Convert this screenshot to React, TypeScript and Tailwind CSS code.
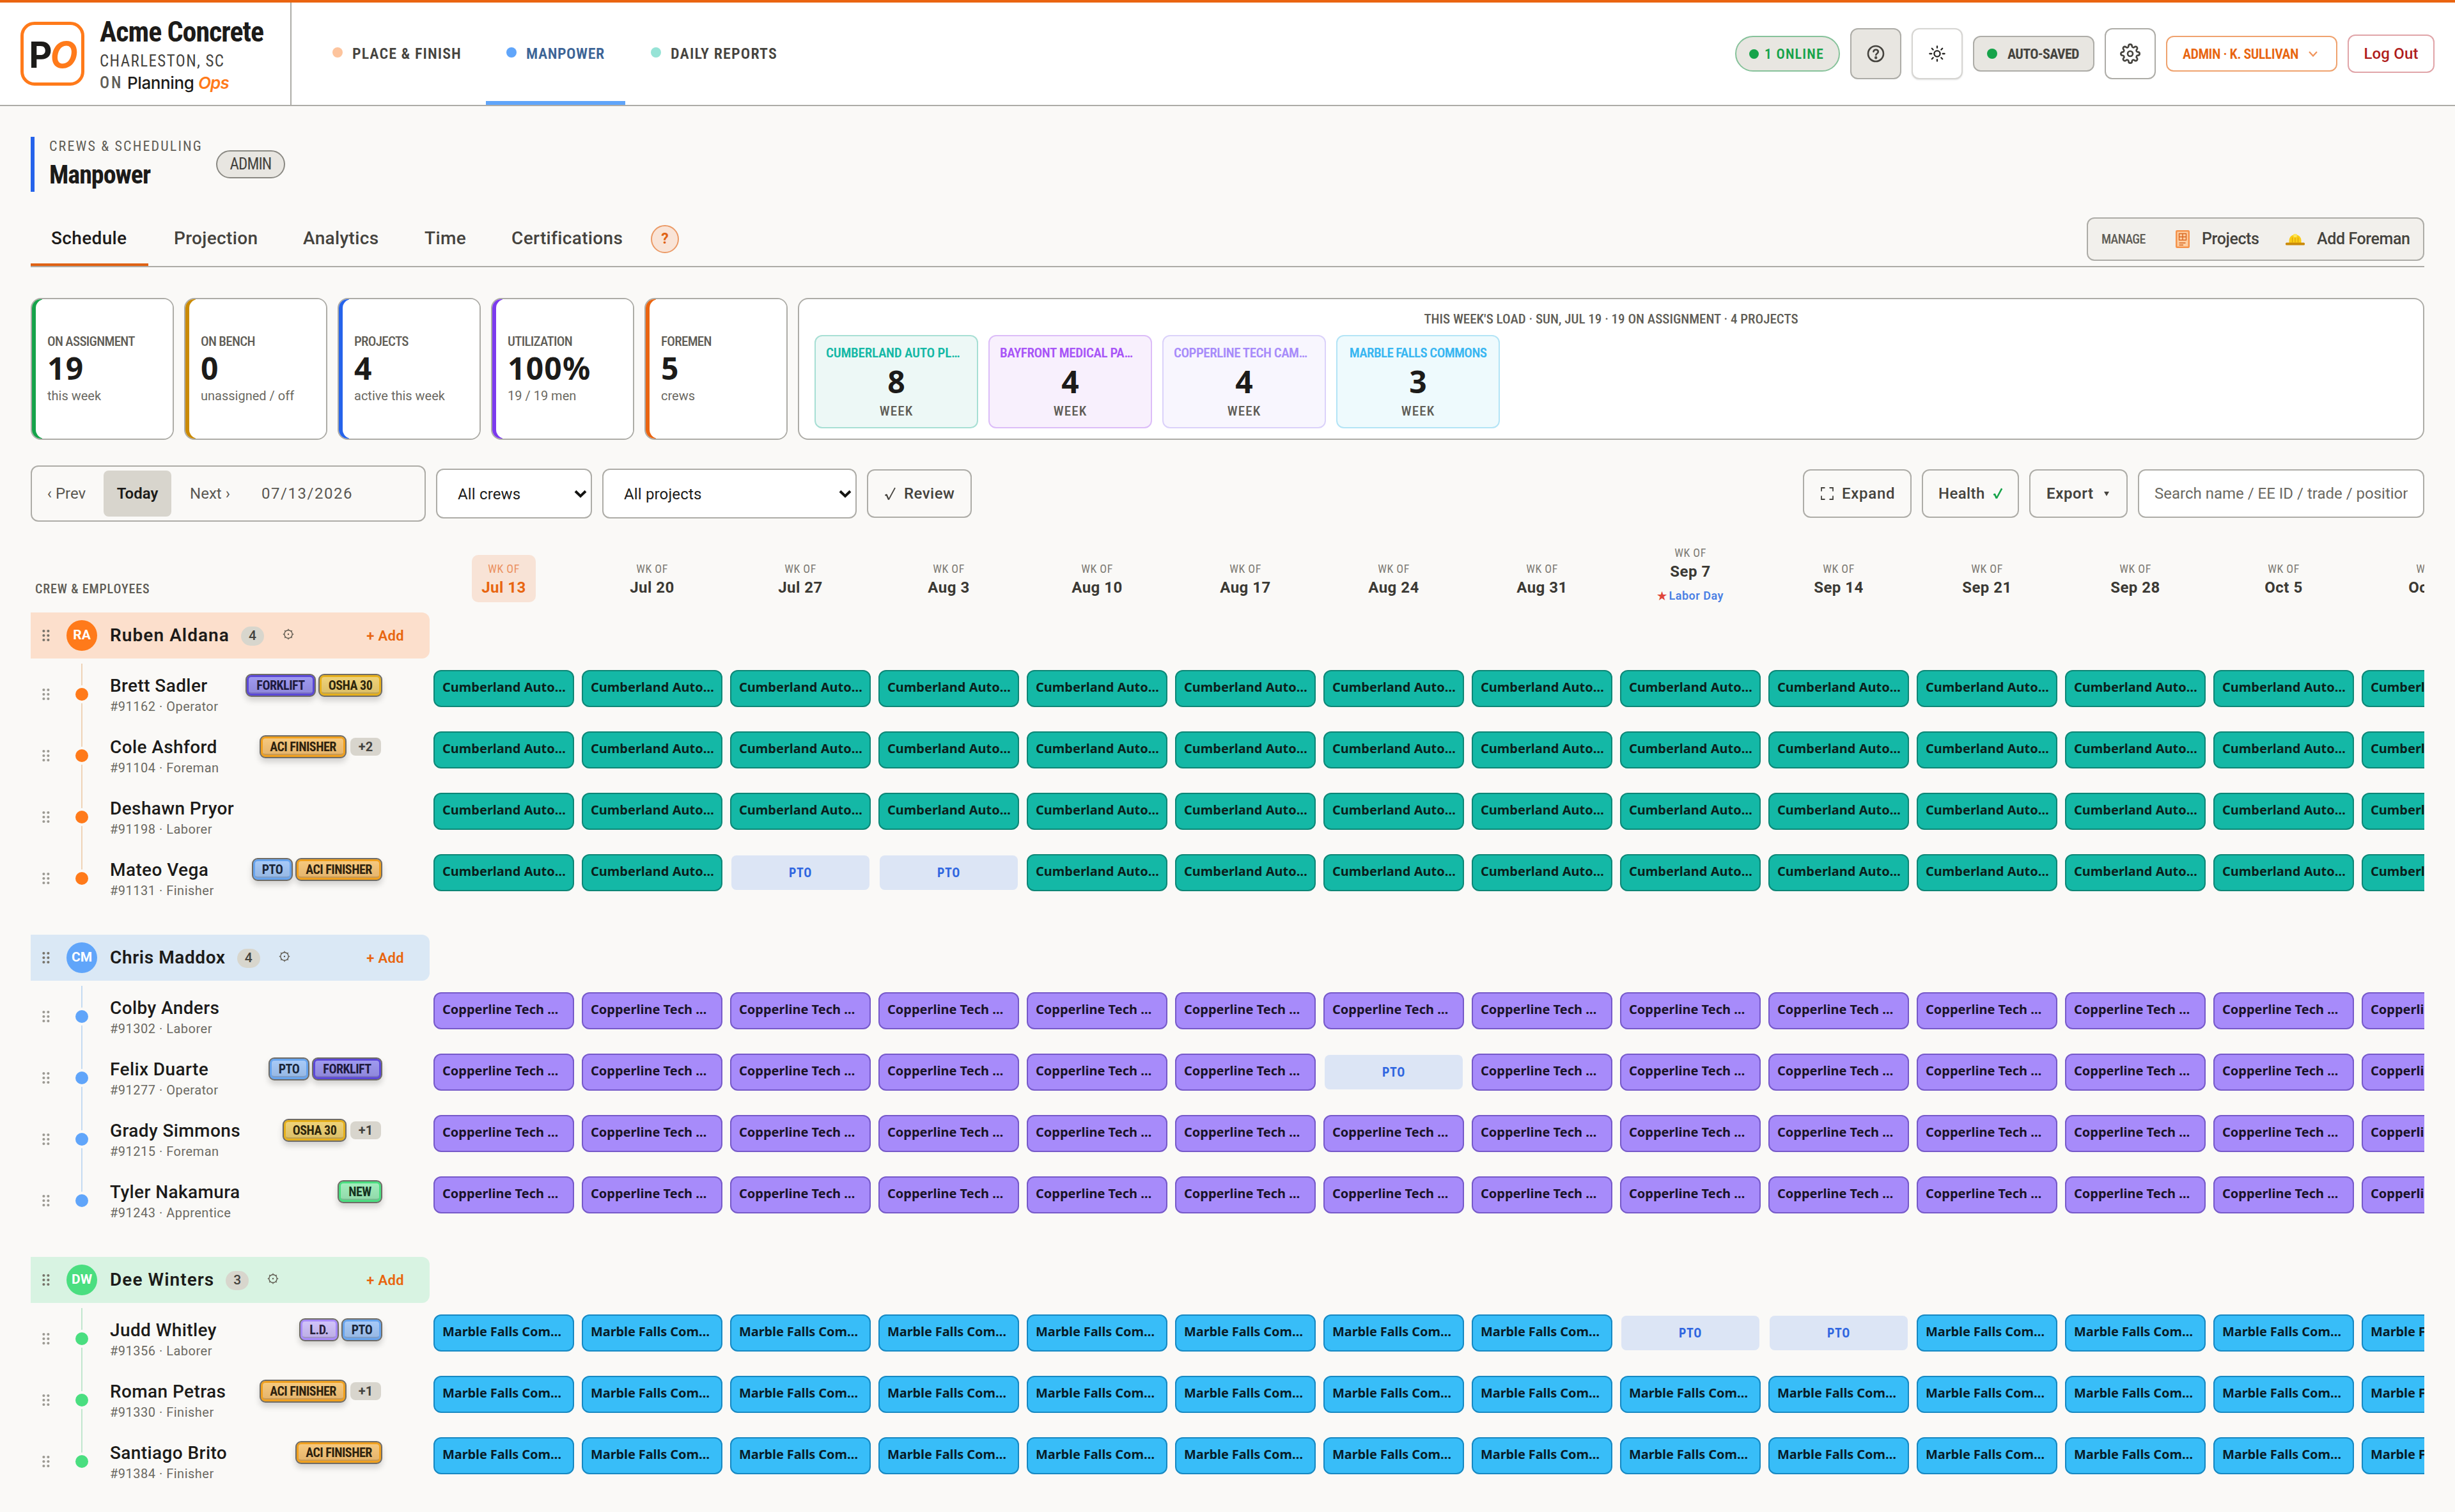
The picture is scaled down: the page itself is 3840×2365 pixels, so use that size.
import { clsx } from "clsx";
import { FiSettings } from "react-icons/fi";

const condensed = "font-['Roboto_Condensed',sans-serif]";

const navItems = [
  { label: "PLACE & FINISH", dot: "bg-[#fdc49d]", width: "w-[264px]", tracking: "tracking-[1.06px]" },
  { label: "MANPOWER", dot: "bg-[#60a5fa]", width: "w-[218px]", tracking: "tracking-[0.53px]", active: true },
  { label: "DAILY REPORTS", dot: "bg-[#96e3d6]", width: "w-[262px]", tracking: "tracking-[1.17px]" },
];

const tabs = [
  { label: "Schedule", width: "w-[184px]", active: true },
  { label: "Projection", width: "w-[194px]" },
  { label: "Analytics", width: "w-[182px]" },
  { label: "Time", width: "w-[128px]" },
  { label: "Certifications", width: "w-[234px]" },
];

const stats = [
  { label: "ON ASSIGNMENT", value: "19", sub: "this week", bar: "bg-[#16a34a]" },
  { label: "ON BENCH", value: "0", sub: "unassigned / off", bar: "bg-[#ca8a04]" },
  { label: "PROJECTS", value: "4", sub: "active this week", bar: "bg-[#2563eb]" },
  { label: "UTILIZATION", value: "100%", sub: "19 / 19 men", bar: "bg-[#7c3aed]" },
  { label: "FOREMEN", value: "5", sub: "crews", bar: "bg-[#ea6410]" },
];

const loads = [
  { name: "CUMBERLAND AUTO PL…", count: 8, box: "border-[#a7dfd4] bg-[#edf8f6]", text: "pl-4 text-left text-[#14b8a6] tracking-[-0.24px]" },
  { name: "BAYFRONT MEDICAL PA…", count: 4, box: "border-[#dcbdf8] bg-[#f8f0fd]", text: "pl-4 text-left text-[#a855f7] tracking-[-0.4px]" },
  { name: "COPPERLINE TECH CAM…", count: 4, box: "border-[#dbd2fa] bg-[#f8f6fe]", text: "pl-4 text-left text-[#a78bfa] tracking-[-0.5px]" },
  { name: "MARBLE FALLS COMMONS", count: 3, box: "border-[#b3e4f6] bg-[#eefafd]", text: "text-[#38b6f1] tracking-[-0.61px]" },
];

const weeks = [
  "Jul 13", "Jul 20", "Jul 27", "Aug 3", "Aug 10", "Aug 17", "Aug 24",
  "Aug 31", "Sep 7", "Sep 14", "Sep 21", "Sep 28", "Oct 5", "Oct 12",
];

const badgeStyles: Record<string, string> = {
  FORKLIFT:
    "w-[110px] text-[#1e1a3e] from-[#a19cf2] to-[#8c85d8] shadow-[inset_0_0_0_3px_#5b48d8,inset_0_-5px_0_#7970c4,0_6px_10px_rgba(0,0,0,.16)]",
  "OSHA 30":
    "w-[100px] text-[#2e260c] from-[#f1d57b] to-[#d8bc66] shadow-[inset_0_0_0_3px_#e6b01c,inset_0_-5px_0_#bfa354,0_6px_10px_rgba(0,0,0,.16)]",
  "ACI FINISHER":
    "w-[136px] text-[#2e220f] from-[#f8cb80] to-[#e2b16a] shadow-[inset_0_0_0_3px_#f0a01e,inset_0_-5px_0_#c99a55,0_6px_10px_rgba(0,0,0,.16)]",
  PTO:
    "w-[64px] text-[#1a2638] from-[#a9ccfa] to-[#94b5e0] shadow-[inset_0_0_0_3px_#67a4ee,inset_0_-5px_0_#7f9ec8,0_6px_10px_rgba(0,0,0,.16)]",
  NEW:
    "w-[70px] text-[#15331f] from-[#a5f0bf] to-[#8ed6a7] shadow-[inset_0_0_0_3px_#4ade80,inset_0_-5px_0_#78bd91,0_6px_10px_rgba(0,0,0,.16)]",
  "L.D.":
    "w-[62px] text-[#261f3a] from-[#d3c5fb] to-[#b9abe2] shadow-[inset_0_0_0_3px_#a78bfa,inset_0_-5px_0_#a294c8,0_6px_10px_rgba(0,0,0,.16)]",
};

type Employee = { name: string; meta: string; badges: string[]; more?: string; pto?: number[] };

type Crew = {
  initials: string;
  name: string;
  head: string;
  accent: string;
  line: string;
  chip: string;
  project: string;
  nameTracking: string;
  employees: Employee[];
};

const crews: Crew[] = [
  {
    initials: "RA",
    name: "Ruben Aldana",
    head: "bg-[#fcdfcc]",
    accent: "bg-[#ff7a1a]",
    line: "bg-[#efd3b6]",
    chip: "bg-[#14b8a6] border-[#0d8676] text-[#0a1f1c]",
    project: "Cumberland Auto…",
    nameTracking: "tracking-[1.05px]",
    employees: [
      { name: "Brett Sadler", meta: "#91162 · Operator", badges: ["FORKLIFT", "OSHA 30"] },
      { name: "Cole Ashford", meta: "#91104 · Foreman", badges: ["ACI FINISHER"], more: "+2" },
      { name: "Deshawn Pryor", meta: "#91198 · Laborer", badges: [] },
      { name: "Mateo Vega", meta: "#91131 · Finisher", badges: ["PTO", "ACI FINISHER"], pto: [2, 3] },
    ],
  },
  {
    initials: "CM",
    name: "Chris Maddox",
    head: "bg-[#dae8f5]",
    accent: "bg-[#60a5fa]",
    line: "bg-[#c4dbf2]",
    chip: "bg-[#a78bfa] border-[#7659c9] text-[#1a1328]",
    project: "Copperline Tech …",
    nameTracking: "tracking-[0.6px]",
    employees: [
      { name: "Colby Anders", meta: "#91302 · Laborer", badges: [] },
      { name: "Felix Duarte", meta: "#91277 · Operator", badges: ["PTO", "FORKLIFT"], pto: [6] },
      { name: "Grady Simmons", meta: "#91215 · Foreman", badges: ["OSHA 30"], more: "+1" },
      { name: "Tyler Nakamura", meta: "#91243 · Apprentice", badges: ["NEW"] },
    ],
  },
  {
    initials: "DW",
    name: "Dee Winters",
    head: "bg-[#d8f3e2]",
    accent: "bg-[#4ade80]",
    line: "bg-[#c0e6ce]",
    chip: "bg-[#38bdf8] border-[#1688c2] text-[#081c28] tracking-[-0.1px]",
    project: "Marble Falls Com…",
    nameTracking: "tracking-[1.05px]",
    employees: [
      { name: "Judd Whitley", meta: "#91356 · Laborer", badges: ["L.D.", "PTO"], pto: [8, 9] },
      { name: "Roman Petras", meta: "#91330 · Finisher", badges: ["ACI FINISHER"], more: "+1" },
      { name: "Santiago Brito", meta: "#91384 · Finisher", badges: ["ACI FINISHER"] },
    ],
  },
];

/* ── Icons ── */

function HelpIcon() {
  return (
    <svg width="28" height="28" viewBox="0 0 28 28" fill="none" stroke="#45433e" strokeWidth="2.6" strokeLinecap="round" strokeLinejoin="round">
      <circle cx="14" cy="14" r="12" />
      <path d="M10.4 10.8c.4-1.9 1.8-3 3.7-3 2.1 0 3.7 1.3 3.7 3.2 0 2.6-3.5 2.8-3.5 5" />
      <circle cx="14.2" cy="20.2" r="0.9" />
    </svg>
  );
}

function SunIcon() {
  return (
    <svg width="28" height="28" viewBox="0 0 28 28" fill="none" stroke="#262522" strokeWidth="2.3" strokeLinecap="round">
      <circle cx="14" cy="14" r="4.6" />
      <path d="M14 2.4v2.4M14 23.2v2.4M2.4 14h2.9M22.7 14h2.9M5.8 5.8l1.9 1.9M20.3 20.3l1.9 1.9M5.8 22.2l1.9-1.9M20.3 7.7l1.9-1.9" />
    </svg>
  );
}

function BlueprintIcon() {
  return (
    <svg width="22" height="28" viewBox="0 0 22 28" fill="none">
      <rect x="1.25" y="1.25" width="19.5" height="25.5" rx="1" fill="#fdcfa3" stroke="#f5924a" strokeWidth="2.5" />
      <path d="M5.5 5.5h11v10h-11zM11 5.5v10M5.5 10.5h11M5.5 20h10M5.5 23.2h6.5" stroke="#d9661f" strokeWidth="1.4" />
    </svg>
  );
}

function HardHatIcon() {
  return (
    <svg width="30" height="19" viewBox="0 0 30 19" fill="none">
      <path d="M5.5 15v-3.5C5.5 5.8 9.8 2 15 2s9.5 3.8 9.5 9.5V15z" fill="#facc15" />
      <path d="M12 1.6c1.6-1 4.4-1 6 0L17.3 6h-4.6z" fill="#fde65a" />
      <path d="M10.5 6.5V14M15 7v7M19.5 6.5V14" stroke="#d79c0c" strokeWidth="1" />
      <rect x="0" y="14.5" width="30" height="4" rx="1.5" fill="#ca8a0a" />
    </svg>
  );
}

function GripIcon({ className }: { className: string }) {
  return (
    <svg width="12" height="20" viewBox="0 0 12 20" className={className} fill="currentColor">
      <circle cx="2.4" cy="3" r="2.1" />
      <circle cx="9.4" cy="3" r="2.1" />
      <circle cx="2.4" cy="10" r="2.1" />
      <circle cx="9.4" cy="10" r="2.1" />
      <circle cx="2.4" cy="17" r="2.1" />
      <circle cx="9.4" cy="17" r="2.1" />
    </svg>
  );
}

function CogIcon() {
  return (
    <svg width="18" height="18" viewBox="0 0 18 18" fill="none" stroke="#5f5a50" strokeWidth="1.4">
      <circle cx="9" cy="9" r="6.2" />
      <circle cx="9" cy="9" r="1.2" fill="#5f5a50" stroke="none" />
      <path d="M9 .8v2M9 15.2v2M.8 9h2M15.2 9h2M3.2 3.2l1.4 1.4M13.4 13.4l1.4 1.4M3.2 14.8l1.4-1.4M13.4 4.6l1.4-1.4" />
    </svg>
  );
}

function CheckIcon({ color, size, bold }: { color: string; size: number; bold?: boolean }) {
  return (
    <svg width={size} height={size + 3} viewBox="0 0 18 21" fill="none" stroke={color} strokeLinejoin="round">
      <path d="M1.5 13l2.2-1.2L7 19.5" strokeWidth={bold ? 3.2 : 2.2} />
      <path d="M7 19.5L17 1" strokeWidth={bold ? 3 : 1.7} />
    </svg>
  );
}

function ExpandIcon() {
  return (
    <svg width="20" height="20" viewBox="0 0 20 20" fill="none" stroke="#45433e" strokeWidth="1.8">
      <path d="M1 6.5V1h5.5M13.5 1H19v5.5M19 13.5V19h-5.5M6.5 19H1v-5.5" />
    </svg>
  );
}

function SelectArrow() {
  return (
    <svg width="20" height="13" viewBox="0 0 20 13" fill="none" stroke="#141412" strokeWidth="4">
      <path d="M2 2.2l8 7.8 8-7.8" />
    </svg>
  );
}

/* ── Header ── */

function Header() {
  return (
    <header className="flex h-[166px] border-t-4 border-b-2 border-t-[#ea6410] border-b-[#adaca7] bg-white">
      <div className="flex w-[456px] items-center border-r-2 border-[#adaca7] pl-8">
        <div className="flex size-[100px] items-center justify-center rounded-[22px] border-[5px] border-[#ff7a1a] pt-[3px] font-['Inter',sans-serif] text-[56px] leading-none font-bold tracking-[-3px]">
          <span className="text-[#1c1b19]">P</span>
          <span className="text-[#ff7a1a] italic">O</span>
        </div>
        <div className={clsx(condensed, "ml-[24px]")}>
          <div className="text-[44px] leading-[58px] font-bold tracking-[-0.99px] text-[#1c1b19]">Acme Concrete</div>
          <div className="text-[25px] leading-[33px] tracking-[1.4px] text-[#45433e]">CHARLESTON, SC</div>
          <div className="flex text-[25px] leading-[36px] font-medium text-[#5f5d56]">
            <span className="w-[43px] tracking-[2.9px]">ON</span>
            <span className="w-[111px] font-['Inter',sans-serif] text-[26px] tracking-[-0.4px] text-[#1c1b19]">Planning</span>
            <span className="font-['Inter',sans-serif] text-[26px] font-semibold tracking-[-0.9px] text-[#ff7a1a] italic">Ops</span>
          </div>
        </div>
      </div>

      <nav className="ml-8 flex gap-2">
        {navItems.map((item) => (
          <div
            key={item.label}
            className={clsx(
              condensed,
              "flex items-center gap-[15px] border-b-[6px] pt-[2px] pl-8 text-[24px] font-semibold",
              item.width,
              item.tracking,
              item.active ? "border-[#60a5fa] text-[#3c6496]" : "border-transparent text-[#45433e]"
            )}
          >
            <span className={clsx("size-4 rounded-full", item.dot)} />
            <span className="pt-[3px]">{item.label}</span>
          </div>
        ))}
      </nav>

      <div className={clsx(condensed, "mr-8 ml-auto flex items-center gap-4")}>
        <div className="flex h-14 w-[164px] items-center rounded-full border-2 border-[#86c29a] bg-[#e8e6e1] pl-5 text-[22px] font-semibold tracking-[1.17px] text-[#16a34a]">
          <span className="mr-[9px] size-[15px] rounded-full bg-[#16a34a]" />
          <span className="pt-px">1 ONLINE</span>
        </div>
        <div className="flex size-20 items-center justify-center rounded-xl border-2 border-[#adaca7] bg-[#e8e6e1]">
          <HelpIcon />
        </div>
        <div className="flex size-20 items-center justify-center rounded-xl border-2 border-[#d6d5d2] bg-white shadow-sm">
          <SunIcon />
        </div>
        <div className="flex h-14 w-[190px] items-center rounded-xl border-2 border-[#adaca7] bg-[#e8e6e1] pl-5 text-[22px] font-bold tracking-[-0.67px] text-[#45433e]">
          <span className="mr-4 size-4 rounded-full bg-[#16a34a]" />
          <span className="pt-px">AUTO-SAVED</span>
        </div>
        <div className="flex size-20 items-center justify-center rounded-xl border-2 border-[#adaca7] bg-white">
          <FiSettings size={32} color="#45433e" />
        </div>
        <div className="flex h-14 w-[268px] items-center rounded-xl border-2 border-[#efa26e] bg-white pl-6 text-[22px] font-semibold tracking-[-0.51px] text-[#e8650f]">
          <span className="pt-px">ADMIN · K. SULLIVAN</span>
          <svg width="14" height="9" viewBox="0 0 14 9" fill="none" stroke="#f0935a" strokeWidth="2.2" className="ml-4">
            <path d="M1 1l6 6.5L13 1" />
          </svg>
        </div>
        <div className="flex h-[60px] w-[136px] items-center justify-center rounded-xl border-2 border-[#e0a4a8] bg-white font-['Roboto',sans-serif] text-[24px] font-medium tracking-[0.16px] text-[#b01c1c]">
          Log Out
        </div>
      </div>
    </header>
  );
}

function PageHead() {
  return (
    <div className={clsx(condensed, "mt-12 flex items-center gap-6")}>
      <div className="h-[86px] w-[266px] border-l-[6px] border-[#2563eb] pl-[23px] whitespace-nowrap">
        <div className="text-[22px] leading-[30px] tracking-[2.15px] text-[#5f5d56]">CREWS & SCHEDULING</div>
        <div className="pt-1 text-[40px] leading-[52px] font-bold tracking-[-1.01px] text-[#1c1b19]">Manpower</div>
      </div>
      <div className="flex h-11 w-[108px] items-center justify-center rounded-full border-2 border-[#8a8983] bg-[#e8e6e1] text-[25px] tracking-[-0.9px] text-[#45433e]">
        ADMIN
      </div>
    </div>
  );
}

function TabBar() {
  return (
    <div className="mt-8 flex h-[86px] items-center border-b-2 border-[#adaca7]">
      <div className="flex gap-2">
        {tabs.map((tab) => (
          <div
            key={tab.label}
            className={clsx(
              "flex h-[84px] items-center border-b-4 pt-px pl-8 text-[28px] font-medium tracking-[0.35px]",
              tab.width,
              tab.active ? "border-[#e06214] text-[#1c1b19]" : "border-transparent text-[#45433e]"
            )}
          >
            {tab.label}
          </div>
        ))}
      </div>
      <div className="ml-4 flex size-11 items-center justify-center rounded-full border-2 border-[#eb9a66] bg-[#f9e4d7] text-[23px] font-bold text-[#e06214]">
        ?
      </div>
      <div className="ml-auto flex h-[68px] w-[528px] items-center rounded-xl border-2 border-[#adaca7] bg-[#f2f0ec] pl-[21px] text-[25px] font-medium tracking-[-0.39px] text-[#45433e]">
        <span className={clsx(condensed, "w-[116px] text-[20px] tracking-[-0.7px] text-[#5f5d56]")}>MANAGE</span>
        <BlueprintIcon />
        <span className="ml-[19px] w-[131px]">Projects</span>
        <HardHatIcon />
        <span className="ml-[19px]">Add Foreman</span>
      </div>
    </div>
  );
}

/* ── Stats strip ── */

function Stats() {
  return (
    <div className="mt-12 flex h-[222px] gap-4">
      {stats.map((s) => (
        <div key={s.label} className="flex w-[224px] overflow-hidden rounded-2xl border-2 border-[#adaca7] bg-white">
          <div className={clsx("w-4 shrink-0", s.bar)} />
          <div className="-ml-[10px] flex flex-1 flex-col justify-center rounded-l-[14px] bg-white pl-[18px] whitespace-nowrap">
            <div className={clsx(condensed, "text-[21px] leading-7 font-medium tracking-[-0.7px] text-[#5f5d56]")}>{s.label}</div>
            <div className="font-['Noto_Sans',sans-serif] text-[48px] leading-[56px] font-bold tracking-[1.2px] text-[#1c1b19]">{s.value}</div>
            <div className="text-[20px] leading-[30px] text-[#6b6962]">{s.sub}</div>
          </div>
        </div>
      ))}
      <div className="flex-1 rounded-2xl border-2 border-[#adaca7] bg-white px-6 pt-[14px]">
        <div className={clsx(condensed, "text-center text-[21px] leading-[34px] font-medium text-[#5f5d56]")}>
          THIS WEEK'S LOAD · SUN, JUL 19 · 19 ON ASSIGNMENT · 4 PROJECTS
        </div>
        <div className="mt-2 flex gap-4">
          {loads.map((l) => (
            <div key={l.name} className={clsx("h-[146px] w-[256px] rounded-xl border-2 pt-3 text-center", l.box)}>
              <div className={clsx(condensed, "text-[21px] leading-7 font-semibold whitespace-nowrap", l.text)}>{l.name}</div>
              <div className="font-['Noto_Sans',sans-serif] text-[48px] leading-[62px] font-bold text-[#1c1b19]">{l.count}</div>
              <div className={clsx(condensed, "text-[21px] leading-[30px] font-medium tracking-[1.14px] text-[#5f5d56]")}>WEEK</div>
            </div>
          ))}
        </div>
      </div>
    </div>
  );
}

function Toolbar() {
  const button = "flex h-[76px] items-center rounded-xl border-2 border-[#adaca7] text-[24px] text-[#45433e]";
  const select = "flex h-[78px] items-center justify-between rounded-xl border-2 border-[#adaca7] bg-white pl-8 pr-[6px] text-[24px] tracking-[0.16px] text-[#1c1b19]";
  return (
    <div className="mt-10 flex h-[88px] items-center gap-4">
      <div className="flex h-[88px] w-[618px] items-center rounded-xl border-2 border-[#adaca7] pl-1 text-[24px] text-[#5a5852]">
        <div className="w-[100px] text-center">‹ Prev</div>
        <div className="mx-2 flex h-[72px] w-[106px] items-center justify-center rounded-lg bg-[#d8d5cd] font-semibold text-[#1c1b19]">Today</div>
        <div className="w-[105px] text-center">Next ›</div>
        <div className="ml-[28px] tracking-[1.53px]">07/13/2026</div>
      </div>
      <div className={clsx(select, "w-[244px]")}>
        <span className="pt-[2px]">All crews</span>
        <SelectArrow />
      </div>
      <div className={clsx(select, "w-[398px]")}>
        <span className="pt-[2px]">All projects</span>
        <SelectArrow />
      </div>
      <div className={clsx(button, "w-[164px] gap-[13px] pl-[25px] font-medium tracking-[0.46px]")}>
        <CheckIcon color="#45433e" size={18} />
        Review
      </div>
      <div className={clsx(button, "ml-auto w-[170px] gap-[13px] pl-[26px] font-medium tracking-[0.72px]")}>
        <ExpandIcon />
        Expand
      </div>
      <div className={clsx(button, "w-[152px] gap-[12px] pl-[24px] font-medium tracking-[0.4px]")}>
        Health
        <CheckIcon color="#16a34a" size={15} bold />
      </div>
      <div className={clsx(button, "w-[154px] gap-4 pl-[25px] font-semibold tracking-[0.6px]")}>
        Export
        <svg width="8" height="7" viewBox="0 0 8 7" fill="#45433e">
          <path d="M0 0h8L4 7z" />
        </svg>
      </div>
      <div className={clsx(button, "w-[448px] bg-white px-6")}>
        <span className="overflow-hidden whitespace-nowrap text-[#6b6962]">Search name / EE ID / trade / position</span>
      </div>
    </div>
  );
}

/* ── Schedule grid ── */

function WeekHeader() {
  return (
    <div className="mt-9 flex h-[106px] items-center overflow-x-clip">
      <div className={clsx(condensed, "mb-[17px] w-[624px] shrink-0 self-end pl-[7px] text-[20px] leading-10 font-medium tracking-[0.87px] text-[#5f5d56]")}>
        CREW & EMPLOYEES
      </div>
      {weeks.map((week, i) => (
        <div key={week} className="flex w-[232px] shrink-0 justify-center">
          <div className={clsx("rounded-[10px] py-2 text-center", i === 0 && "w-[100px] bg-[#f8e3d6]")}>
            <div className={clsx(condensed, "text-[18px] leading-[28px] tracking-[0.5px]", i === 0 ? "text-[#eb9160]" : "text-[#7d7b74]")}>WK OF</div>
            <div className={clsx("text-[24px] leading-[30px] font-bold tracking-[0.5px]", i === 0 ? "text-[#e8650f]" : "text-[#3b3934]")}>{week}</div>
            {week === "Sep 7" && (
              <div className="flex h-[50px] gap-[3px] text-[18px] leading-[46px] font-semibold tracking-[0.5px] text-[#4a80e4]">
                <span className="text-[17px] text-[#e0453a]">★</span>
                Labor Day
              </div>
            )}
          </div>
        </div>
      ))}
    </div>
  );
}

function CrewHeader({ crew }: { crew: Crew }) {
  return (
    <div className={clsx("flex h-[72px] w-[624px] items-center rounded-r-xl pl-[18px]", crew.head)}>
      <GripIcon className="text-[#77736a]" />
      <div className={clsx("ml-[26px] flex size-12 items-center justify-center rounded-full text-[21px] font-bold text-white", crew.accent)}>
        {crew.initials}
      </div>
      <div className={clsx("ml-5 text-[28px] font-semibold text-[#1c1b19]", crew.nameTracking)}>{crew.name}</div>
      <div className="mt-[2px] ml-[18px] flex h-[30px] w-9 items-center justify-center rounded-full bg-[#d8d6cd] text-[21px] font-medium text-[#45433e]">
        {crew.employees.length}
      </div>
      <div className="mb-1 ml-[29px]">
        <CogIcon />
      </div>
      <div className="mr-[40px] ml-auto text-[22px] font-semibold tracking-[0.34px] text-[#e8650f]">+ Add</div>
    </div>
  );
}

function EmployeeRow({ employee, crew, last }: { employee: Employee; crew: Crew; last: boolean }) {
  return (
    <div className="flex h-24">
      <div className="flex w-[624px] shrink-0 pl-[18px]">
        <GripIcon className="mt-[38px] text-[#9b9992]" />
        <div className="ml-9 flex w-7 flex-col items-center">
          <div className={clsx("h-[34px] w-0.5", crew.line)} />
          <div className={clsx("my-1 size-5 rounded-full", crew.accent)} />
          {!last && <div className={clsx("h-[34px] w-0.5", crew.line)} />}
        </div>
        <div className="ml-[30px] pt-[18px] whitespace-nowrap">
          <div className="text-[28px] leading-[34px] font-medium tracking-[0.4px] text-[#1c1b19]">{employee.name}</div>
          <div className="text-[20px] leading-[30px] tracking-[0.5px] text-[#6b6962]">{employee.meta}</div>
        </div>
        <div className="mt-4 mr-[74px] ml-auto flex h-9 items-center gap-1">
          {employee.badges.map((badge) => (
            <div
              key={badge}
              className={clsx(
                condensed,
                "flex h-9 items-center justify-center rounded-[9px] border-2 border-[#6f6c66] bg-linear-to-b text-[20px] font-bold tracking-[-0.5px] whitespace-nowrap",
                badgeStyles[badge]
              )}
            >
              {badge}
            </div>
          ))}
          {employee.more && (
            <div className="mx-[2px] flex h-7 w-12 items-center justify-center rounded-lg bg-[#d8d5cd] text-[20px] font-bold text-[#45433e]">
              {employee.more}
            </div>
          )}
        </div>
      </div>
      {weeks.map((week, i) => (
        <div key={week} className="w-[232px] shrink-0 px-[6px] pt-[10px]">
          {employee.pto?.includes(i) ? (
            <div className={clsx(condensed, "mx-[2px] mt-[2px] flex h-[54px] items-center justify-center rounded-lg bg-[#dce5f5] text-[20px] font-bold tracking-[0.6px] text-[#2f66e0]")}>
              PTO
            </div>
          ) : (
            <div className={clsx("h-[58px] rounded-xl border-2 pl-3 font-['Noto_Sans',sans-serif] text-[20px] leading-[50px] font-bold whitespace-nowrap", crew.chip)}>
              {crew.project}
            </div>
          )}
        </div>
      ))}
    </div>
  );
}

export default function App() {
  return (
    <div className="h-[2365px] w-[3840px] overflow-hidden bg-[#faf9f7] font-['Roboto',sans-serif]">
      <Header />
      <main className="px-12">
        <PageHead />
        <TabBar />
        <Stats />
        <Toolbar />
        <WeekHeader />
        {crews.map((crew) => (
          <section key={crew.name} className="mb-10">
            <CrewHeader crew={crew} />
            <div className="overflow-x-clip pt-2">
              {crew.employees.map((employee, i) => (
                <EmployeeRow key={employee.name} employee={employee} crew={crew} last={i === crew.employees.length - 1} />
              ))}
            </div>
          </section>
        ))}
      </main>
    </div>
  );
}
